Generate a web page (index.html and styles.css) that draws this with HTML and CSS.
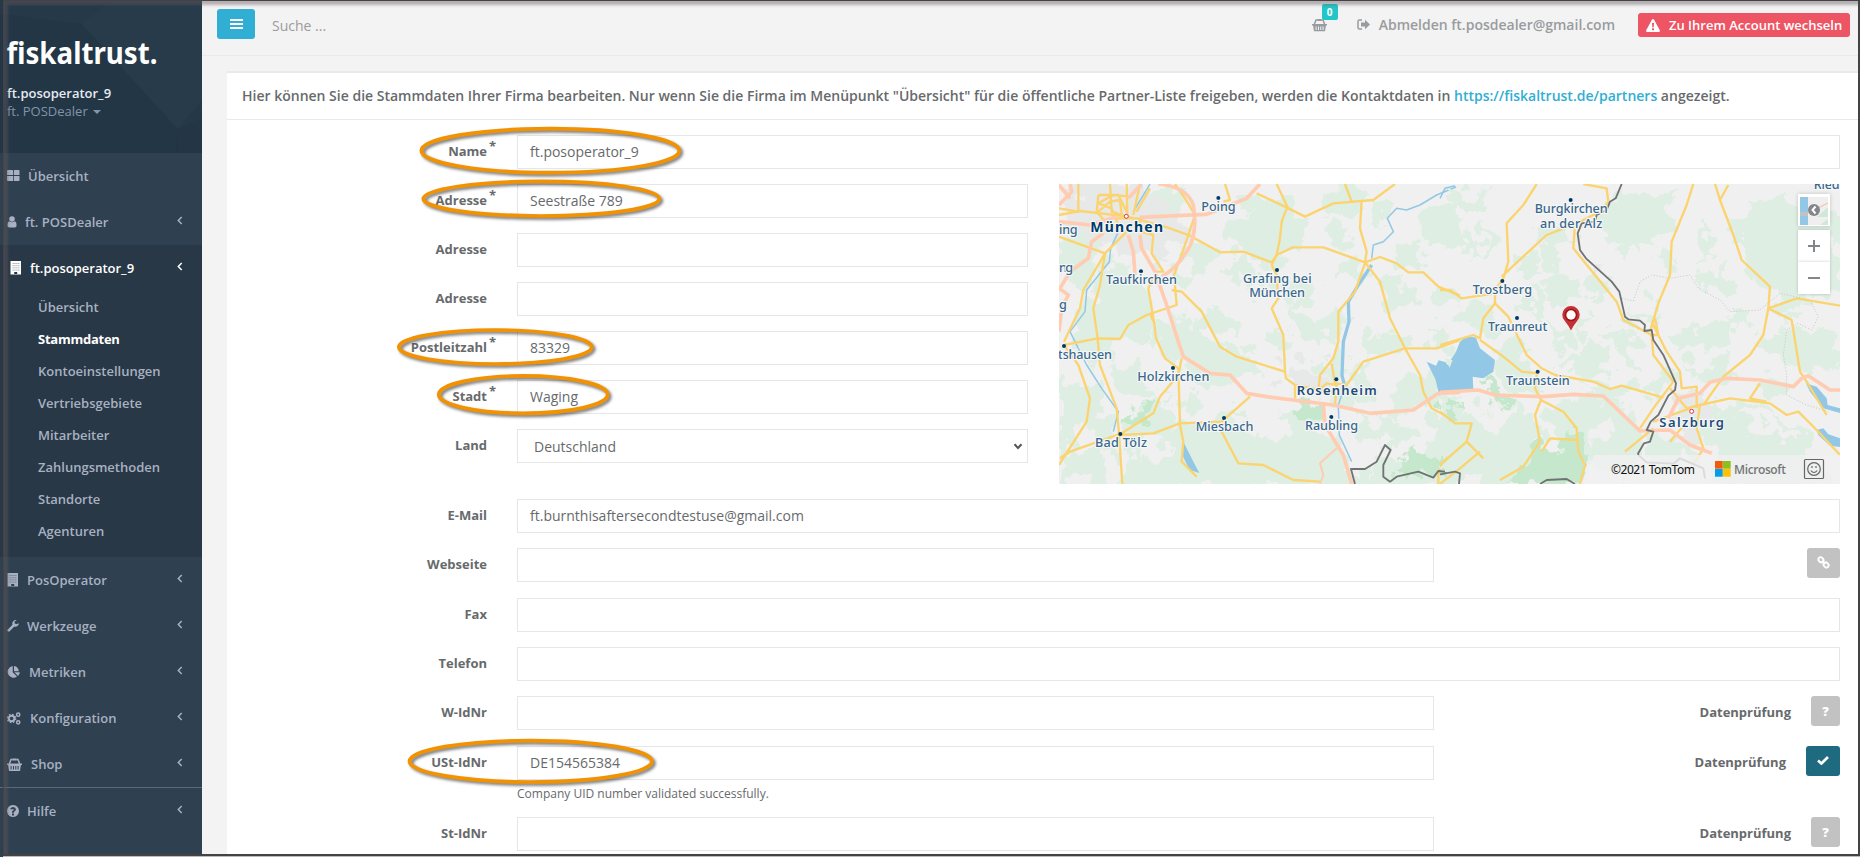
FILE: index.html
```html
<!DOCTYPE html>
<html lang="de">
<head>
<meta charset="utf-8">
<title>fiskaltrust. – Stammdaten</title>
<link rel="stylesheet" href="styles.css">
</head>
<body>
<svg class="defs" width="0" height="0" aria-hidden="true">
  <symbol id="i-grid" viewBox="0 0 13 12"><path d="M.8 0h4.400q.8 0 .8.800v4.200h-6v-4.200q0-.8.800-.8zM7.500 0h4.200q.8 0 .8.800v4.200h-5.700v-4.200q0-.8.700-.8zM0 6h6v5h-5.200q-.8 0-.8-.8zM6.800 6h5.700v4.200q0 .8-.8.800h-4.900z"/></symbol>
  <symbol id="i-user" viewBox="0 0 10 12"><circle cx="5" cy="3" r="2.800"/><path d="M2 5.200q3 2.200 6 0Q9.600 5.800 9.600 9.200q0 2.300-2 2.300h-5.200q-2 0-2-2.300Q.4 5.800 2 5.200z"/></symbol>
  <symbol id="i-build" viewBox="0 0 12 14"><path fill-rule="evenodd" d="M.5 0h10.500v13.500h-10.500zM4.200 11v2h3v-2z"/><path class="windows" d="M2.500 2.500h7M2.500 4.700h7M2.500 6.900h7M2.500 9.100h7"/></symbol>
  <symbol id="i-wrench" viewBox="0 0 12 12"><path d="M11.900 3.200A3.500 3.500 0 0 1 7.300 6.500L2.700 11.300Q1.800 12.200.8 11.300T.8 9.400L5.500 4.800A3.500 3.500 0 0 1 9.700.2L7.600 1.600V3.300L9.200 4.200z"/></symbol>
  <symbol id="i-pie" viewBox="0 0 13 12"><path d="M5.700 0V6.200L10 10.600A5.900 5.900 0 1 1 5.700 0z"/><path d="M7 0A5.700 5.700 0 0 1 11.800 5.200H7z"/><path d="M7.400 6.300H12.800Q12.800 8.500 11 10z"/></symbol>
  <symbol id="i-cogs" viewBox="0 0 14 13"><circle class="cog" cx="4.600" cy="6.500" r="2.800"/><circle class="teeth" cx="4.600" cy="6.500" r="4.100"/><circle class="cog thin" cx="11.200" cy="2.700" r="1.600"/><circle class="cog thin" cx="11.200" cy="10.300" r="1.600"/></symbol>
  <symbol id="i-basket" viewBox="0 0 15 13"><path d="M0 5.500h15v1.500h-15z"/><path class="line" d="M2.300 6L4 1.600h1.500M12.700 6L11 1.600h-1.500"/><path d="M5.300.5h4.400v2h-4.400z"/><path fill-rule="evenodd" d="M1 6.500h13l-1 6.500H2zM3.600 8v3.500h1V8zM6 8v3.500h1V8zM8.300 8v3.500h1V8zM10.600 8v3.500h1V8z"/></symbol>
  <symbol id="i-help" viewBox="0 0 12 12"><path fill-rule="evenodd" d="M6 0a6 6 0 1 0 .001 0zM5 8.600h2v1.800H5zM3.100 4Q4.200 2 6.200 2q2.700.2 2.700 2.400 0 1.300-1.900 2.400v.9H5V6.400Q6.900 5.300 6.900 4.600q-.7-1.400-2.200 0z"/></symbol>
  <symbol id="i-chev" viewBox="0 0 6 9"><path class="line" d="M4.700 1L1.300 4.500L4.700 8"/></symbol>
</svg>

<aside class="sidebar">
  <header class="brand">
    <svg class="facets" width="202" height="153" viewBox="0 0 202 153" aria-hidden="true">
      <path d="M0 14L82 24L178 129V153H0z" fill="#1f3140" opacity=".3"/>
      <path d="M82 24L112 0H202V118L178 129z" fill="#2c4151" opacity=".3"/>
      <path d="M178 129L202 100V153H176z" fill="#1f3040" opacity=".25"/>
    </svg>
    <svg class="logo" width="153" height="32" viewBox="0 0 153 32"><text x="-.5" y="25" textLength="151" lengthAdjust="spacingAndGlyphs">fiskaltrust.</text></svg>
    <strong class="brand-name">ft.posoperator_9</strong>
    <span class="brand-sub">ft. POSDealer <i class="caret"></i></span>
  </header>
  <nav class="nav">
    <a class="item"><svg width="13" height="12"><use href="#i-grid"/></svg><span>Übersicht</span></a>
    <a class="item"><svg width="10" height="12"><use href="#i-user"/></svg><span class="near">ft. POSDealer</span><svg class="chev" width="6" height="9"><use href="#i-chev"/></svg></a>
    <div class="active">
      <a class="item current"><svg width="12" height="14"><use href="#i-build"/></svg><span class="near">ft.posoperator_9</span><svg class="chev" width="6" height="9"><use href="#i-chev"/></svg></a>
      <ul class="sub">
        <li>Übersicht</li><li class="on">Stammdaten</li><li>Kontoeinstellungen</li><li>Vertriebsgebiete</li><li>Mitarbeiter</li><li>Zahlungsmethoden</li><li>Standorte</li><li>Agenturen</li>
      </ul>
    </div>
    <a class="item"><svg width="12" height="14"><use href="#i-build"/></svg><span>PosOperator</span><svg class="chev" width="6" height="9"><use href="#i-chev"/></svg></a>
    <a class="item"><svg width="12" height="12"><use href="#i-wrench"/></svg><span>Werkzeuge</span><svg class="chev" width="6" height="9"><use href="#i-chev"/></svg></a>
    <a class="item"><svg width="13" height="12"><use href="#i-pie"/></svg><span class="far">Metriken</span><svg class="chev" width="6" height="9"><use href="#i-chev"/></svg></a>
    <a class="item"><svg width="14" height="13"><use href="#i-cogs"/></svg><span class="far">Konfiguration</span><svg class="chev" width="6" height="9"><use href="#i-chev"/></svg></a>
    <a class="item"><svg width="15" height="13"><use href="#i-basket"/></svg><span class="far">Shop</span><svg class="chev" width="6" height="9"><use href="#i-chev"/></svg></a>
    <a class="item divided"><svg width="12" height="12"><use href="#i-help"/></svg><span>Hilfe</span><svg class="chev" width="6" height="9"><use href="#i-chev"/></svg></a>
  </nav>
</aside>

<main class="main">
  <div class="topbar">
    <button class="burger" aria-label="Menü"><i></i><i></i><i></i></button>
    <span class="search">Suche ...</span>
    <span class="cart"><svg width="15" height="14" viewBox="0 0 15 13"><use href="#i-basket"/></svg><b class="badge">0</b></span>
    <a class="logout"><svg width="13" height="11" viewBox="0 0 13 11"><path class="line" d="M5 1H2.500Q1 1 1 2.500v6Q1 10 2.500 10H5"/><path d="M4 3.500h4V.8L13 5.500L8 10.200V7.500H4z"/></svg>Abmelden ft.posdealer@gmail.com</a>
    <a class="switch"><svg width="14" height="13" viewBox="0 0 14 13"><path fill-rule="evenodd" d="M7 0Q7.700 0 8.100.7L13.800 11.200Q14.300 13 12.700 13H1.300Q-.3 13 .2 11.200L5.900.7Q6.300 0 7 0zM6 4l.3 4.300h1.400L8 4zM6 9.300v1.900h2V9.300z"/></svg>Zu Ihrem Account wechseln</a>
  </div>

  <section class="panel">
    <div class="panel-head">Hier können Sie die Stammdaten Ihrer Firma bearbeiten. Nur wenn Sie die Firma im Menüpunkt "Übersicht" für die öffentliche Partner-Liste freigeben, werden die Kontaktdaten in <a>https://fiskaltrust.de/partners</a> angezeigt.</div>
    <div class="form">
      <div class="row"><label>Name<sup>*</sup></label><div class="field">ft.posoperator_9</div></div>
      <div class="split">
        <div class="stack">
          <div class="row"><label>Adresse<sup>*</sup></label><div class="field">Seestraße 789</div></div>
          <div class="row"><label>Adresse</label><div class="field"></div></div>
          <div class="row"><label>Adresse</label><div class="field"></div></div>
          <div class="row"><label>Postleitzahl<sup>*</sup></label><div class="field">83329</div></div>
          <div class="row"><label>Stadt<sup>*</sup></label><div class="field">Waging</div></div>
          <div class="row"><label>Land</label><div class="field select">Deutschland<svg width="10" height="7" viewBox="0 0 10 7"><path class="line" d="M1.500 1.300L5 5L8.500 1.300"/></svg></div></div>
        </div>
        <div class="map">
          <svg width="781" height="300" viewBox="0 0 781 300">
            <defs>
              <filter id="rough" x="-5%" y="-5%" width="110%" height="110%" color-interpolation-filters="sRGB"><feTurbulence type="fractalNoise" baseFrequency=".016" numOctaves="4" seed="8"/><feDisplacementMap in="SourceGraphic" scale="130" xChannelSelector="R" yChannelSelector="G"/></filter>
              <path id="copse" d="M40 60l50-20 30 40-40 40zM210 130l30-30 50 60-50 30zM330 40l70 10-20 60-40-20zM80 280l80-10 10 60-60 20zM260 260l20-50 50 30-20 60zM420 200l60-30 20 50-60 40zM400 330l40-20 30 60-50 10zM520 60l30-30 50 50-40 40zM180 400l60-30 50 50-70 20zM30 420l50-20 10 70-50 10zM520 300l50-10 30 70-60-10zM350 450l50-30 60 50-60 20z"/>
            </defs>
            <rect width="781" height="300" fill="#f0f0f0"/>
            <!-- western half -->
            <g transform="translate(-9 -9) scale(.33333)">
              <g filter="url(#rough)">
                <path class="town" d="M60 40L250 20L390 60L410 170L330 260L220 220L100 200L40 140zM690 560h110l50 60l40 40l-60 20l-160-60z"/>
                <path class="wood" d="M530 160L600 110L690 100L770 160L750 230L650 280L560 240zM27 190L120 190L150 280L100 350L27 310zM180 240L270 330L310 430L260 500L160 500L120 560L60 480L120 380zM330 430L450 440L520 530L600 560L480 650L400 600L340 520zM470 380L560 430L540 500L490 450zM400 190L500 230L490 300L420 280zM840 40L960 40L920 120L820 110zM1090 90L1230 60L1230 250L1110 190zM990 300L1110 330L1080 420L1010 380zM560 60L680 70L650 110L560 90zM890 560L970 570L990 660L900 690zM620 300L700 310L670 380L610 340zM300 40L370 30L400 110L340 90zM720 390L840 440L830 500L740 480zM1080 590L1180 600L1130 700L1010 740zM940 470L1040 500L960 560zM200 560L270 570L260 660L200 640z"/>
                <path class="wood" d="M27 620L150 650L200 760L160 930H27zM240 700L340 640L380 760L480 740L560 700L640 760L780 720L860 780L900 880L1000 900L1230 760V940H200L230 820zM560 800L640 740L720 790L640 840zM900 730L1040 740L980 820zM1130 680L1230 660V780z"/>
                <use class="wood" href="#copse" x="20" y="230"/><use class="wood" href="#copse" x="620" y="40"/><use class="wood" href="#copse" x="600" y="420"/>
                <path class="park" d="M230 710L310 670L300 720L240 760zM750 690L810 680L800 740L740 740zM1060 830L1160 820L1180 890L1050 900zM1180 680L1230 690V730z"/>
                <path class="land" d="M60 760h80l10 60l-90 20zM260 800h110l-30 60h-90zM540 720h130l60 60l-120 10z"/>
              </g>
              <g class="water"><path d="M1130 560l28 12 8-16 30 8 34-50v122l-62 26-12-50zM400 800l14 28 20 40 14 26-30-10-22-46z"/></g>
              <path class="river" d="M205 170L182 220L178 260L110 345L105 410L60 470L110 570L155 640L205 710L190 770M300 27L250 110M1218 36L1160 60L1110 90L1070 105L1040 100L1012 130L1030 170L1000 200L970 210L965 250"/>
              <path class="river wide" d="M965 270L925 330L895 380L897 440L880 500L876 600L885 640"/><path class="river" d="M885 630L865 690L868 780L905 860"/>
              <g class="road">
                <path d="M27 120L90 108L230 124L345 155L420 182L510 232L580 230L665 262L680 240L728 217L820 217L945 262L990 246L1040 265L1075 292L1120 292L1165 335L1230 362"/>
                <path d="M230 170L165 235L100 345L90 400L42 500M27 185L165 235L150 330L130 400L143 490L150 570L200 700L207 775L217 927"/>
                <path d="M42 510L143 490L210 492L235 450L290 420L380 390L372 300L398 230L435 120L405 70L375 27"/>
                <path d="M270 170L310 180L305 235L340 290L320 290L295 340L312 440L318 490L345 550L385 580L390 750L400 800L395 860L440 905M365 345L395 350L455 410L510 515L560 545L705 590L708 610L735 630L860 655"/>
                <path d="M310 440L300 415M395 550L385 600L330 665L310 715L215 775L60 830L30 850M207 780L310 775L390 745L515 740L600 665M515 770L565 865L640 870L730 915L810 920"/>
                <path d="M525 27L540 75L520 80M680 27L712 95L695 140L690 190L680 240L665 270L680 300L685 370L665 400L700 480L705 590M620 55L705 95L765 125L850 85L970 75L1035 27M885 27L905 80M935 75L930 160L950 230L945 262L990 320L1020 430L1065 520L1110 600L1120 650L1145 700L1230 745"/>
                <path d="M945 265L915 350L865 410L865 500L850 550L810 600L805 650M845 565L855 625L890 630L940 560L1065 520L1160 520L1230 495M855 690L860 630L830 625L800 650M735 670L735 630M42 510L85 570L120 670L110 740L65 810L27 870M1230 800L1190 850L1165 890L1165 927"/>
                <path d="M85 27V110L27 100M145 60L140 110L175 150L205 160M145 60L205 60L230 110M145 110L180 80L210 75L215 120M230 27L232 120M270 27L250 120M300 40L260 110M180 27L185 110L230 125M200 130H270L270 165M205 150L185 100L145 85L190 60L240 65"/>
              </g>
              <g class="mway">
                <path d="M27 140L120 150L200 125M270 127L380 122L470 118L540 90L590 70L630 27M325 27Q410 35 430 90Q445 180 410 230Q380 280 335 305M27 345L60 290L115 250L125 200L160 175M27 470L35 400L55 360L27 340M235 180L250 230L255 300M270 180L275 220L315 290L350 390L385 500L400 545L480 595L540 600L590 655L650 665L850 690L960 715L1090 705L1165 655L1230 652M820 690L825 750L880 840L905 927M27 90L65 50L60 27M27 30L60 70M235 70L275 27"/>
                <path class="thin" d="M860 820L810 865L820 900L810 927"/>
              </g>
              <path class="border" d="M915 927L903 882L945 882L980 860L1005 810L1022 825L1000 870V905L1020 920L1040 905L1105 890L1150 908L1165 888L1230 895"/>
            </g>
            <!-- eastern half -->
            <g transform="translate(381 -9) scale(.33333)">
              <g filter="url(#rough)">
                <path class="wood" d="M560 50L720 40L680 170L600 240L510 200L450 140zM870 150L980 70L1200 110V330L1080 390L940 320zM20 60L150 50L90 120zM130 130L190 210L130 240zM60 210L120 250L70 270zM300 180L370 200L330 300L290 250zM310 300L400 290L430 390L340 380zM60 390L130 400L100 470L40 430zM240 370L300 380L280 470zM330 440L390 470L370 540zM400 520L480 510L510 600L430 590zM500 480L600 490L570 590zM770 300L880 260L830 360L760 330zM780 150L820 180L800 270zM760 470L880 430L860 510L760 520zM950 490L1050 440L1180 490L1200 590L1060 570zM590 370L650 400L620 460zM130 490L240 540L300 640L190 640zM720 550L780 560L770 610z"/>
                <path class="wood" d="M0 670L120 700L280 690L300 800L200 930H0zM320 690L440 650L560 700L600 770L560 930L430 850L340 800zM620 780L700 770L760 850L640 930zM800 700L950 690L1090 780L1160 930H820zM420 630L560 620L640 670L520 680z"/>
                <use class="wood" href="#copse" x="0" y="120"/><use class="wood" href="#copse" x="600" y="180"/>
                <path class="park" d="M120 610L170 640L200 700L130 670zM0 680L60 690L60 730H0zM270 830L400 790L450 870L380 927H200z"/>
                <path class="town" d="M740 640L800 680L800 800L750 820L720 760L690 740zM480 270h40v30h-40z"/>
                <path class="land" d="M130 700h80l-20 60h-60zM880 720h110l60 60h-90zM470 740h60l-20 60h-60z"/>
              </g>
              <g class="water"><path d="M0 605L30 575L60 500L80 482L108 488L120 520L165 555L160 590L130 610L98 605L100 642L0 655zM1098 625L1130 635L1160 670L1163 690L1200 700V714L1150 700L1110 650zM1130 765L1150 760L1165 778L1200 790V816L1170 812L1135 780z"/></g>
              <path class="river" d="M0 70L15 40L45 32"/>
              <path class="dotted" d="M545 370L580 378L600 320L635 300L690 310L750 300L775 340L840 375L870 410L960 405L1020 355L1110 375L1135 425L1115 465L1075 445L1040 465L1030 540L1040 600V660L1100 690L1165 710"/>
              <g class="road">
                <path d="M290 27L250 90L200 145L205 260L190 310L165 345V385L205 425L260 540L305 580L345 600L460 620L510 642L545 632L670 668M0 345L30 345L65 370L165 355M185 305L260 235L320 180L410 145L480 110L505 80L500 40L430 27"/>
                <path d="M165 385L130 430L120 490L100 480L0 510M120 495L190 545L245 590L295 595M290 600L285 640L303 675L285 720L300 800L250 875L180 915M303 675L370 710L410 760L415 830L435 870L420 927M305 830L330 790L410 795"/>
                <path d="M405 145L400 220L530 380L550 435L635 480L640 540L700 620L640 700L600 760M630 470L655 385L690 300L695 200L740 90L760 27M635 440L680 530L720 590L725 640L770 635V700M630 480H655L645 430"/>
                <path d="M825 27L840 75L880 180L905 255L990 335L985 400L970 480L930 540L850 605L790 690M840 75L865 30M985 400L1070 370L1200 392M985 400L1055 435L1080 590L1100 620L1160 720M960 625L930 670L980 680M690 640L740 700L780 690L870 670L990 685L1040 720L1075 710L1130 765L1200 840"/>
                <path d="M0 710L45 745L95 745L80 800L0 870M120 830L60 880L0 927M640 760L555 830M780 690L770 760L790 820L760 870M640 740L750 700M740 740L690 800M80 800L130 850"/>
              </g>
              <g class="mway"><path d="M0 652L115 645L165 660L310 665L400 658L490 663L600 768L690 765L750 810L815 835M685 730L715 670L780 655L810 622L860 610L960 615L1060 635L1085 610L1105 602L1170 645L1200 645"/></g>
              <path class="border" d="M545 27L527 70L510 80L500 105L470 120L465 140L425 145L413 175L420 225L438 250L515 320L538 350L555 425L565 433L600 437L615 450L613 468L635 465L640 495L670 540L708 625L705 645L685 662L655 720L632 740L620 765L640 770L630 800L612 805L593 838M593 838L620 862L700 866L720 850L790 880L795 910M0 898L45 890L60 895L57 927M300 927L320 915L380 912L405 927"/>
            </g>
            <g class="names">
              <g transform="translate(-9 -9) scale(.33333)">
                <g class="dots"><circle cx="505" cy="69" r="6"/><circle cx="273" cy="289" r="6"/><circle cx="681" cy="285" r="6"/><circle cx="42" cy="513" r="6"/><circle cx="369" cy="579" r="6"/><circle cx="522" cy="729" r="6"/><circle cx="211" cy="777" r="6"/><circle cx="859" cy="613" r="6"/><circle cx="844" cy="726" r="6"/></g>
                <circle class="capital" cx="229" cy="124" r="6"/>
                <text class="big" x="121" y="171" textLength="218">München</text>
                <text x="454" y="108" textLength="103">Poing</text>
                <text x="27" y="177" textLength="56">ing</text><text x="27" y="290" textLength="42">ng</text><text x="27" y="403" textLength="17">g</text>
                <text x="168" y="328" textLength="213">Taufkirchen</text>
                <text x="579" y="324" textLength="206">Grafing bei</text><text x="598" y="367" textLength="167">München</text>
                <text x="24" y="552" textLength="162">tshausen</text>
                <text x="262" y="617" textLength="216">Holzkirchen</text>
                <text x="437" y="768" textLength="173">Miesbach</text>
                <text x="135" y="815" textLength="156">Bad Tölz</text>
                <text class="mid" x="740" y="659" textLength="240">Rosenheim</text>
                <text x="765" y="766" textLength="159">Raubling</text>
              </g>
              <g transform="translate(381 -9) scale(.33333)">
                <g class="dots"><circle cx="392" cy="75" r="6"/><circle cx="187" cy="318" r="6"/><circle cx="231" cy="429" r="6"/><circle cx="293" cy="590" r="6"/></g>
                <circle class="capital" cx="755" cy="709" r="6"/>
                <text x="284" y="115" textLength="219">Burgkirchen</text><text x="300" y="158" textLength="187">an der Alz</text>
                <text x="98" y="357" textLength="178">Trostberg</text>
                <text x="144" y="468" textLength="178">Traunreut</text>
                <text x="198" y="629" textLength="191">Traunstein</text>
                <text class="mid" x="658" y="756" textLength="194">Salzburg</text>
                <text x="1121" y="42" textLength="78">Ried</text>
              </g>
            </g>
            <g class="pin"><path d="M512 146.500Q509.500 141.500 505.500 136.500A8.700 8.700 0 1 1 518.500 136.500Q514.500 141.500 512 146.500z" fill="#c43135"/><circle cx="512" cy="131" r="6.300" fill="#a51217"/><circle cx="512" cy="131" r="4.700" fill="#fff"/></g>
            <path d="M535 271H781V300H525z" fill="#f0f0f0" opacity=".82"/>
            <text class="credit" x="552" y="290" textLength="84">©2021 TomTom</text>
            <g><rect x="656" y="277" width="7.700" height="7.700" fill="#f25a0b"/><rect x="664" y="277" width="7.700" height="7.700" fill="#8cc01e"/><rect x="656" y="285" width="7.700" height="7.700" fill="#059de3"/><rect x="664" y="285" width="7.700" height="7.700" fill="#fdc202"/></g>
            <text class="ms" x="675" y="290" textLength="52">Microsoft</text>
            <g class="smile"><rect x="745.500" y="275.500" width="19" height="19" rx="1"/><circle cx="755" cy="285" r="6.300"/><path d="M751.800 286.500Q755 290.500 758.200 286.500"/><path d="M753 282v2M757 282v2"/></g>
          </svg>
          <div class="map-tools">
            <div class="layer"><svg width="28" height="28" viewBox="0 0 28 28"><rect width="28" height="28" fill="#eeefee"/><rect width="8" height="28" fill="#92c8e6"/><path d="M17 20L28 10V20zM20 28l8-6v6z" fill="#cfe9d6"/><path d="M0 16h8L28 6M0 18h8" fill="none" stroke="#f3b9a0"/><circle cx="14" cy="13" r="6" fill="#83878a"/><path d="M15.500 9.500L12.500 13l3 3.500" fill="none" stroke="#fff" stroke-width="2"/></svg></div>
            <div class="zoom"><svg width="12" height="12"><path d="M6 0v12M0 6h12"/></svg></div>
            <div class="zoom"><svg width="12" height="12"><path d="M0 6h12"/></svg></div>
          </div>
        </div>
      </div>
      <div class="row"><label>E-Mail</label><div class="field">ft.burnthisaftersecondtestuse@gmail.com</div></div>
      <div class="row tall"><label>Webseite</label><div class="field short"></div><div class="tail"><button class="btn link"><svg width="13" height="13" viewBox="0 0 13 13"><g fill="none" stroke="#fff" stroke-width="1.900"><rect x="1.200" y="1.600" width="5.400" height="4.400" rx="2.200" transform="rotate(45 3.900 3.800)"/><rect x="6.400" y="6.800" width="5.400" height="4.400" rx="2.200" transform="rotate(45 9.100 9)"/><path d="M5 5l3 3"/></g></svg></button></div></div>
      <div class="row"><label>Fax</label><div class="field"></div></div>
      <div class="row"><label>Telefon</label><div class="field"></div></div>
      <div class="row tall"><label>W-IdNr</label><div class="field short"></div><div class="tail">Datenprüfung<button class="btn">?</button></div></div>
      <div class="row noted"><label>USt-IdNr</label><div class="field short">DE154565384</div><div class="tail">Datenprüfung<button class="btn ok"><svg width="12" height="9" viewBox="0 0 12 9"><path d="M1 4.500L4.400 7.500L11 1" fill="none" stroke="#fff" stroke-width="2.700"/></svg></button></div></div>
      <p class="note">Company UID number validated successfully.</p>
      <div class="row"><label>St-IdNr</label><div class="field short"></div><div class="tail">Datenprüfung<button class="btn">?</button></div></div>
    </div>
  </section>
</main>

<svg class="marks" width="1860" height="857" aria-hidden="true">
  <ellipse cx="550.300" cy="150.700" rx="129" ry="22"/>
  <ellipse cx="541.300" cy="198.700" rx="118" ry="17.300"/>
  <ellipse cx="495.300" cy="347" rx="96.500" ry="17"/>
  <ellipse cx="523.200" cy="394.600" rx="84.500" ry="18.700"/>
  <ellipse cx="530.700" cy="761.300" rx="121.200" ry="20.700"/>
</svg>
<div class="frame"></div>
</body>
</html>
```

FILE: styles.css
```css
* { box-sizing: border-box; }
body {
  margin: 0;
  width: 1860px;
  height: 857px;
  overflow: hidden;
  display: flex;
  position: relative;
  background: #f3f3f4;
  color: #676a6c;
  font-family: "Open Sans", "Noto Sans", sans-serif;
  font-size: 13px;
}
.defs { position: absolute; }
button { border: 0; font: inherit; padding: 0; }
.line { fill: none; stroke: currentColor; stroke-width: 1.500; }
svg { fill: currentColor; }

/* Sidebar */
.sidebar { width: 202px; height: 857px; flex: none; background: #2f4050; color: #a7b1c2; font-weight: 600; overflow: hidden; }
.brand { height: 153px; padding: 39px 0 0 7px; display: flex; flex-direction: column; position: relative; background: #263949; }
.facets { position: absolute; left: 0; top: 0; }
.logo { position: relative; flex: none; overflow: visible; }
.logo text { font: 700 29.500px "Noto Sans", sans-serif; fill: #fff; }
.brand-name { position: relative; margin-top: 13px; line-height: 18px; font-weight: 600; color: #e6eaf2; }
.brand-sub { position: relative; font-weight: 400; line-height: 18px; color: #8095a8; }
.caret { display: inline-block; margin: 0 0 2px 2px; border: 4px solid transparent; border-top-color: currentColor; border-bottom: 0; }
.item { display: flex; align-items: center; height: 46px; padding: 0 19px 0 7px; }
.item span { margin-left: 8px; margin-right: 1px; flex: 1; }
.item .near { margin-left: 8px; }
.item .far { margin-left: 9px; }
.item .chev { margin-top: -4px; }
.windows { stroke: #2f4050; stroke-width: .7; stroke-dasharray: 1.200 .7; fill: none; opacity: .7; }
.cog { fill: none; stroke: currentColor; stroke-width: 2; }
.cog.thin { stroke-width: 1.500; }
.teeth { fill: none; stroke: currentColor; stroke-width: 1.400; stroke-dasharray: 1.600 1.620; }
.active { background: #293846; height: 312px; }
.current { color: #fff; padding-left: 10px; }
.sub { list-style: none; margin: 0; padding: 0 0 0 38px; line-height: 32px; }
.sub .on { color: #fff; font-weight: 700; letter-spacing: -.25px; }
.divided { border-top: 1px solid #586b7a; height: 47px; }

/* Top bar */
.main { flex: 1; min-width: 0; }
.topbar { height: 56px; padding: 0 10px 14px 15px; display: flex; align-items: center; border-bottom: 1px solid #e7eaec; font-size: 14px; }
.burger { width: 38px; height: 30px; margin-top: 7px; border-radius: 3px; background: #31aed3; display: flex; flex-direction: column; align-items: center; justify-content: center; gap: 2px; }
.burger i { width: 13px; height: 2px; background: #fff; }
.search { margin: 10px auto 0 17px; color: #9b9b9b; }
.cart { position: relative; display: flex; margin: 9px 30px 0 0; color: #999c9e; }
.badge { position: absolute; left: 10px; top: -14px; width: 16px; height: 16px; border-radius: 2px; background: #23c6c8; color: #fff; font-size: 10px; line-height: 16px; text-align: center; }
.logout { display: flex; align-items: center; gap: 9px; margin: 8px 23px 0 0; font-weight: 600; color: #999c9e; }
.switch { display: flex; align-items: center; width: 212px; height: 24px; margin-top: 9px; padding-left: 8px; gap: 9px; border-radius: 3px; background: #ed5565; color: #fff; font-weight: 600; font-size: 13px; white-space: nowrap; }

/* Panel and form */
.panel { margin: 15px 0 0 25px; border-top: 2px solid #e7eaec; background: #fff; height: 786px; }
.panel-head { height: 47px; padding-left: 15px; line-height: 46px; border-bottom: 1px solid #e7eaec; font-size: 14px; font-weight: 600; white-space: nowrap; }
.panel-head a { color: #31aed3; }
.form { padding: 15px 20px 0 0; }
.row { display: flex; height: 34px; margin-bottom: 15px; }
.row.tall { margin-bottom: 16px; }
.row.noted { margin-bottom: 0; }
label { width: 290px; padding-right: 30px; text-align: right; font-weight: 700; line-height: 33px; flex: none; position: relative; }
sup { position: absolute; left: 262px; top: -5px; font-size: 13px; line-height: 33px; }
.field { flex: 1; border: 1px solid #e5e6e7; padding: 0 12px; line-height: 31px; font-size: 14px; }
.field.short { flex: none; width: 917px; }
.select { display: flex; justify-content: space-between; align-items: center; padding: 1px 4px 0 16px; }
.select svg { color: #555; }
.select .line { stroke-width: 2; }
.split { display: flex; gap: 31px; height: 315px; }
.stack { width: 801px; }
.map { position: relative; width: 781px; height: 300px; overflow: hidden; }
.tail { flex: 1; display: flex; justify-content: flex-end; gap: 20px; font-weight: 700; line-height: 33px; }
.btn { width: 29px; height: 30px; border-radius: 3px; background: #c2c2c2; color: #fff; font-weight: 800; font-size: 13px; line-height: 28px; display: flex; align-items: center; justify-content: center; padding-bottom: 1px; }
.btn.link { width: 33px; }
.btn.ok { width: 34px; background: #1e6a7f; }
.note { margin: 5px 0 14px 290px; height: 18px; font-size: 12px; line-height: 18px; }

/* Map */
.town { fill: #e7e8e8; }
.wood { fill: #deeee3; }
.park { fill: #c5e8cd; }
.land { fill: #f0f0f0; }
.water { fill: #92c8e6; }
.river { fill: none; stroke: #92c8e6; stroke-width: 4.500; stroke-linejoin: round; }
.river.wide { stroke-width: 10; }
.road { fill: none; stroke: #fbd36f; stroke-width: 7; stroke-linejoin: round; }
.mway { fill: none; stroke: #ffccb1; stroke-width: 11; stroke-linejoin: round; }
.mway .thin { stroke-width: 6; }
.border { fill: none; stroke: #707373; stroke-width: 5.500; stroke-linejoin: round; }
.dotted { fill: none; stroke: #c4c4c6; stroke-width: 3; stroke-dasharray: 3 6; }
.names text { font: 500 38px "Noto Sans", sans-serif; fill: #3a678c; stroke: #f5f7f7; stroke-width: 7; paint-order: stroke; stroke-linejoin: round; }
.names .big { font-size: 42px; font-weight: 700; fill: #003a68; }
.names .mid { font-size: 39px; font-weight: 600; fill: #1d4c77; }
.dots { fill: #003a68; }
.capital { fill: #fff; stroke: #d9394c; stroke-width: 3; }
.credit { font: 12px "Noto Sans", sans-serif; fill: #111; }
.ms { font: 600 12px "Open Sans", sans-serif; fill: #777; }
.smile { fill: none; stroke: #666; stroke-width: 1.200; }
.map-tools { position: absolute; right: 10px; top: 10px; width: 32px; }
.layer { height: 32px; padding: 3px 2px 1px; margin-bottom: 4px; background: #fff; box-shadow: 0 0 4px #0003; overflow: hidden; }
.layer svg { display: block; }
.zoom { height: 32px; background: #fff; display: flex; align-items: center; justify-content: center; box-shadow: 0 0 3px #0003; }
.zoom path { stroke: #83878a; stroke-width: 2; }

/* Highlight rings and window frame */
.marks { position: absolute; left: 0; top: 0; pointer-events: none; }
.marks ellipse { fill: none; stroke: #f39200; stroke-width: 3.700; filter: drop-shadow(2px 2.500px 1.500px #0008); }
.frame { position: absolute; inset: 0 0 1px 3px; border: solid #434345; border-width: 1px 2px 2px 1px; box-shadow: inset 4px 4px 3px #66585e70, 0 1px #bbb; pointer-events: none; }
```
